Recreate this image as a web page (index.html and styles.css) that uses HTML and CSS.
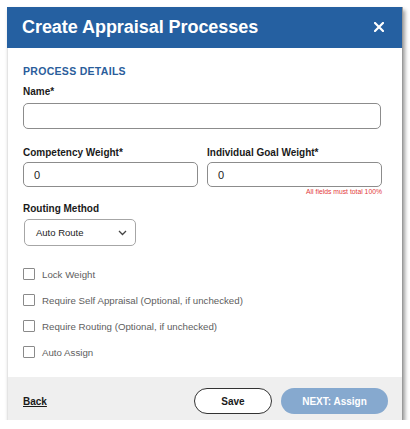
FILE: index.html
```html
<!DOCTYPE html>
<html>
<head>
<meta charset="utf-8">
<link rel="stylesheet" href="styles.css">
</head>
<body>
<div class="modal">
  <div class="modal-header">
    <h1 class="title">Create Appraisal Processes</h1>
    <svg class="close" width="10" height="10" viewBox="0 0 10 10"><path d="M1 1 L9 9 M9 1 L1 9" stroke="#ffffff" stroke-width="2.2" stroke-linecap="square"/></svg>
  </div>
  <div class="modal-body">
    <div class="section-title">PROCESS DETAILS</div>
    <label class="label name-label">Name*</label>
    <div class="input wide"></div>
    <div class="row">
      <div class="col">
        <label class="label w-label">Competency Weight*</label>
        <div class="input"><span class="value">0</span></div>
      </div>
      <div class="col">
        <label class="label w-label">Individual Goal Weight*</label>
        <div class="input"><span class="value">0</span></div>
      </div>
    </div>
    <div class="note">All fields must total 100%</div>
    <label class="label routing-label">Routing Method</label>
    <div class="select">
      <span>Auto Route</span>
      <svg class="chev" width="9" height="6" viewBox="0 0 9 6"><polyline points="1,1 4.5,4.5 8,1" fill="none" stroke="#444" stroke-width="1.3"/></svg>
    </div>
    <div class="checks">
      <div class="check"><span class="box"></span><span>Lock Weight</span></div>
      <div class="check"><span class="box"></span><span>Require Self Appraisal (Optional, if unchecked)</span></div>
      <div class="check"><span class="box"></span><span>Require Routing (Optional, if unchecked)</span></div>
      <div class="check"><span class="box"></span><span>Auto Assign</span></div>
    </div>
  </div>
  <div class="modal-footer">
    <a class="back">Back</a>
    <div class="actions">
      <button class="btn save">Save</button>
      <button class="btn next">NEXT: Assign</button>
    </div>
  </div>
</div>
</body>
</html>
```
FILE: styles.css
```css
html, body {
  margin: 0;
  padding: 0;
  background: #ffffff;
}
body {
  font-family: "Liberation Sans", Arial, sans-serif;
  padding: 7px 0 0 7px;
}
.modal {
  width: 396px;
  background: #ffffff;
  border-right: 1px solid #9a9a9a;
  border-left: 1px solid #e4e4e4;
  box-shadow: 2px 3px 4px rgba(0,0,0,0.4);
  box-sizing: border-box;
}
.modal-header {
  height: 41px;
  background: #2560a1;
  display: flex;
  align-items: center;
  justify-content: space-between;
  padding: 0 18px 0 15px;
  margin-left: -1px;
}
.title {
  margin: 0;
  color: #ffffff;
  font-size: 18px;
  font-weight: bold;
  letter-spacing: -0.05px;
}
.close {
  display: block;
  margin-top: -1px;
}
.modal-body {
  padding: 16px 20px 19px 15px;
  display: flex;
  flex-direction: column;
}
.section-title {
  color: #2a5d9b;
  font-size: 10.5px;
  font-weight: bold;
  line-height: 14px;
  letter-spacing: 0.3px;
}
.label {
  display: block;
  color: #1a1a1a;
  font-size: 10px;
  font-weight: bold;
  line-height: 12px;
}
.name-label { margin-top: 8px; margin-bottom: 5px; }
.w-label { margin-bottom: 3px; }
.input {
  height: 26px;
  border: 1px solid #8c8c8c;
  border-radius: 5px;
  box-sizing: border-box;
  display: flex;
  align-items: center;
  padding-left: 10px;
}
.wide { width: 358px; }
.value { font-size: 11px; color: #222; }
.row {
  display: flex;
  gap: 9px;
  margin-top: 18px;
}
.col { width: 175px; }
.row .input { height: 25px; }
.note {
  align-self: flex-end;
  width: 358px;
  text-align: right;
  color: #e33a3a;
  font-size: 6.8px;
  line-height: 8px;
  margin-top: 1px;
}
.routing-label { margin-top: 7px; margin-bottom: 4px; }
.select {
  width: 112px;
  height: 27px;
  border: 1px solid #a6a6a6;
  border-radius: 5px;
  box-sizing: border-box;
  display: flex;
  align-items: center;
  justify-content: space-between;
  padding: 0 8px 0 11px;
  margin-left: 1px;
  font-size: 9.5px;
  color: #222;
}
.chev { display: block; }
.checks {
  display: flex;
  flex-direction: column;
  gap: 14px;
  margin-top: 22px;
}
.check {
  display: flex;
  align-items: center;
  gap: 7px;
  height: 12px;
  font-size: 9.7px;
  color: #5e5e5e;
}
.box {
  width: 12px;
  height: 12px;
  border: 1px solid #8a8a8a;
  box-sizing: border-box;
  border-radius: 1px;
}
.modal-footer {
  background: #efefef;
  display: flex;
  align-items: center;
  justify-content: space-between;
  padding: 11px 14px 6px 15px;
}
.back {
  color: #1a1a1a;
  font-size: 10px;
  font-weight: bold;
  text-decoration: underline;
}
.actions {
  display: flex;
  gap: 9px;
}
.btn {
  height: 26px;
  border-radius: 13px;
  font-family: "Liberation Sans", Arial, sans-serif;
  font-size: 10px;
  font-weight: bold;
  padding: 0;
  box-sizing: border-box;
}
.save {
  width: 78px;
  background: #ffffff;
  border: 1px solid #333333;
  color: #1a1a1a;
}
.next {
  width: 107px;
  background: #86a9cf;
  border: none;
  color: #ffffff;
}
```
